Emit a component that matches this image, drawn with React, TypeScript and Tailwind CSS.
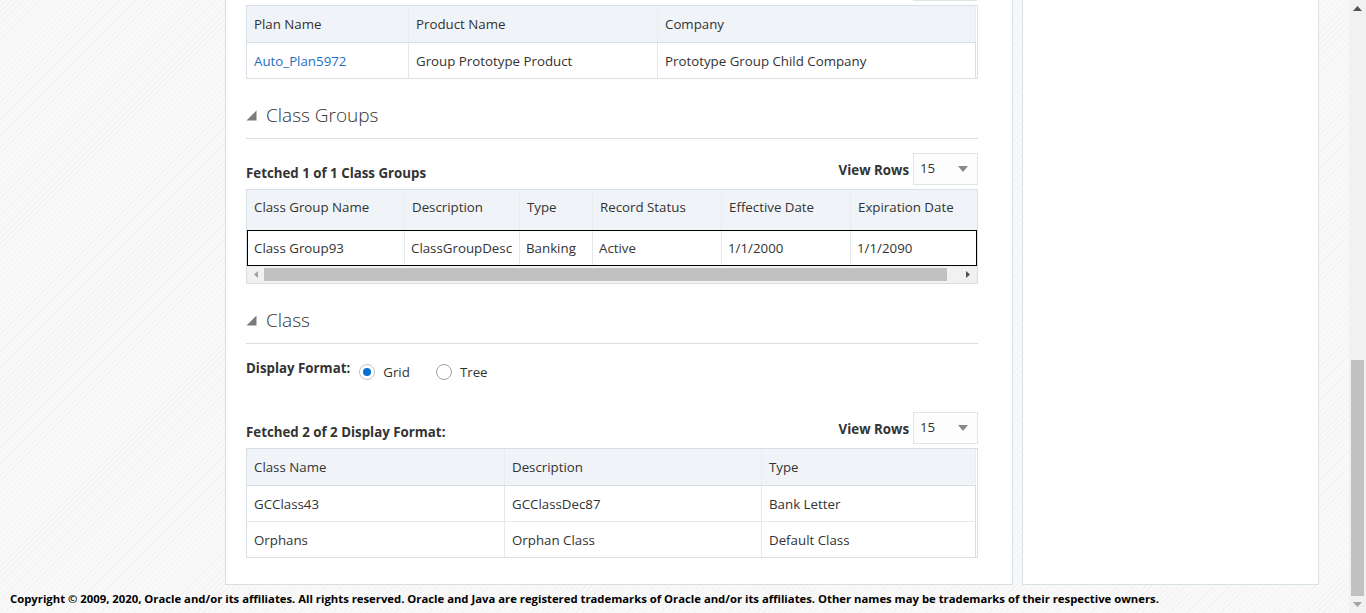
import React from "react";

const font = { fontFamily: '"Open Sans", "Noto Sans", Arial, sans-serif' };

function Triangle() {
  return (
    <svg width="11" height="11" viewBox="0 0 11 11" className="shrink-0">
      <polygon points="10.5,0.5 10.5,10.5 0.5,10.5" fill="#7a7a7a" />
    </svg>
  );
}

function SectionTitle({ title, className }: { title: string; className: string }) {
  return (
    <div className={`flex items-center gap-[9px] border-b border-[#d6dfe6] pb-[9px] ${className}`}>
      <Triangle />
      <span className="text-[19px] leading-[28px] font-light text-[#333]">{title}</span>
    </div>
  );
}

function Caret() {
  return (
    <svg width="10" height="6" viewBox="0 0 10 6">
      <polygon points="0,0 10,0 5,6" fill="#8a8a8a" />
    </svg>
  );
}

function ViewRows() {
  return (
    <div className="flex items-center gap-[4px]">
      <span className="text-[13.3px] font-bold text-[#333] leading-[18px] mt-[2px]">View Rows</span>
      <div className="flex items-center justify-between w-[65px] h-[32px] border border-[#dfe4e7] bg-[#fdfdfe] pl-[6px] pr-[9px]">
        <span className="text-[13.3px] text-[#333]">15</span>
        <Caret />
      </div>
    </div>
  );
}

function FetchRow({ label, className }: { label: string; className: string }) {
  return (
    <div className={`flex items-end justify-between ${className}`}>
      <span className="text-[13.3px] font-bold text-[#333] leading-[18px] pb-[3px]">{label}</span>
      <ViewRows />
    </div>
  );
}

type Col = { label: string; w: string };

function Cell({
  children,
  w,
  last,
  head,
  pad = "pt-[2px]",
}: {
  children: React.ReactNode;
  w: string;
  last?: boolean;
  head?: boolean;
  pad?: string;
}) {
  return (
    <div
      className={`${w} ${pad} shrink-0 flex items-center pl-[7px] overflow-hidden whitespace-nowrap ${
        last ? "" : head ? "border-r border-[#e8edf2]" : "border-r border-[#e6e9ec]"
      }`}
    >
      {children}
    </div>
  );
}

function Radio({ checked, label }: { checked: boolean; label: string }) {
  return (
    <div className="flex items-center gap-[8px]">
      <div
        className={`w-[16px] h-[16px] rounded-full border flex items-center justify-center bg-white ${
          checked ? "border-[#b8c4cf]" : "border-[#9aa4ad]"
        }`}
      >
        {checked && <div className="w-[8px] h-[8px] rounded-full bg-[#0572ce]" />}
      </div>
      <span className="text-[13.3px] text-[#333] leading-[18px]">{label}</span>
    </div>
  );
}

export default function App() {
  const planCols: Col[] = [
    { label: "Plan Name", w: "w-[162px]" },
    { label: "Product Name", w: "w-[249px]" },
    { label: "Company", w: "w-[318px]" },
  ];
  const cgCols: Col[] = [
    { label: "Class Group Name", w: "w-[158px]" },
    { label: "Description", w: "w-[115px]" },
    { label: "Type", w: "w-[73px]" },
    { label: "Record Status", w: "w-[129px]" },
    { label: "Effective Date", w: "w-[129px]" },
    { label: "Expiration Date", w: "w-[140px]" },
  ];
  const cgRow = ["Class Group93", "ClassGroupDesc", "Banking", "Active", "1/1/2000", "1/1/2090"];
  const clsCols: Col[] = [
    { label: "Class Name", w: "w-[258px]" },
    { label: "Description", w: "w-[257px]" },
    { label: "Type", w: "w-[214px]" },
  ];
  const clsRows = [
    ["GCClass43", "GCClassDec87", "Bank Letter"],
    ["Orphans", "Orphan Class", "Default Class"],
  ];

  return (
    <div
      style={font}
      className="flex h-[613px] w-full overflow-hidden bg-[repeating-linear-gradient(135deg,#f3f3f3_0px,#f3f3f3_1px,#f9f9f9_1px,#f9f9f9_4px)] text-[#333]"
    >
      <div className="flex-1 flex flex-col min-w-0">
        <div className="flex h-[585px] shrink-0">
          {/* Main panel */}
          <div className="ml-[225px] w-[788px] shrink-0 bg-white border-x border-b border-[#d6dfe6] pl-[20px] pr-[34px] flex flex-col">
            <div className="h-[5px] flex justify-end">
              <div className="w-[64px] h-[1px] bg-[#dfe4e7] mr-[1px]" />
            </div>

            {/* Plan table */}
            <div className="border border-[#d6dfe6] text-[13.3px]">
              <div className="flex h-[37px] bg-[#f0f3f7] border-b border-[#d6dfe6] text-[#333] mr-[1px]">
                {planCols.map((c) => (
                  <Cell key={c.label} w={c.w} head>
                    {c.label}
                  </Cell>
                ))}
              </div>
              <div className="flex h-[35px] mr-[1px]">
                <Cell w={planCols[0].w}>
                  <span className="text-[#1f6fbf]">Auto_Plan5972</span>
                </Cell>
                <Cell w={planCols[1].w}>Group Prototype Product</Cell>
                <div className={`${planCols[2].w} pt-[2px] shrink-0 flex items-center pl-[7px] border-r border-[#d6dfe6]`}>
                  Prototype Group Child Company
                </div>
              </div>
            </div>

            <SectionTitle title="Class Groups" className="mt-[22px]" />
            <FetchRow label="Fetched 1 of 1 Class Groups" className="mt-[14px]" />

            {/* Class group table */}
            <div className="mt-[4px] border border-[#d6dfe6] text-[13.3px] overflow-hidden">
              <div className="flex h-[40px] bg-[#f0f3f7]">
                {cgCols.map((c, i) => (
                  <Cell key={c.label} w={c.w} head last={i === cgCols.length - 1} pad="pb-[5px]">
                    {c.label}
                  </Cell>
                ))}
              </div>
              <div className="flex h-[36px] border border-black">
                {cgCols.map((c, i) => (
                  <div
                    key={c.label}
                    className={`${i === 0 ? "w-[157px]" : c.w} pt-[2px] shrink-0 flex items-center pl-[6px] whitespace-nowrap overflow-hidden ${
                      i === cgCols.length - 1 ? "" : "border-r border-[#e6e9ec]"
                    }`}
                  >
                    {cgRow[i]}
                  </div>
                ))}
              </div>
              {/* horizontal scrollbar */}
              <div className="flex items-center h-[17px] bg-[#f1f1f1]">
                <div className="w-[17px] flex items-center justify-center">
                  <svg width="4" height="7" viewBox="0 0 4 7">
                    <polygon points="4,0 4,7 0,3.5" fill="#a3a3a3" />
                  </svg>
                </div>
                <div className="h-[13px] w-[683px] bg-[#c1c1c1]" />
                <div className="flex-1 flex items-center justify-end pr-[7px]">
                  <svg width="4" height="7" viewBox="0 0 4 7">
                    <polygon points="0,0 0,7 4,3.5" fill="#505050" />
                  </svg>
                </div>
              </div>
            </div>

            <SectionTitle title="Class" className="mt-[22px]" />

            <div className="flex items-start mt-[15px]">
              <span className="text-[13.3px] font-bold leading-[18px]">Display Format:</span>
              <div className="flex items-center gap-[26px] ml-[9px] pt-[4px]">
                <Radio checked label="Grid" />
                <Radio checked={false} label="Tree" />
              </div>
            </div>

            <FetchRow label="Fetched 2 of 2 Display Format:" className="mt-[31px]" />

            {/* Class table */}
            <div className="mt-[4px] border border-[#d6dfe6] text-[13.3px]">
              <div className="flex h-[37px] bg-[#f0f3f7] border-b border-[#d6dfe6] mr-[1px]">
                {clsCols.map((c) => (
                  <Cell key={c.label} w={c.w} head>
                    {c.label}
                  </Cell>
                ))}
              </div>
              {clsRows.map((r, ri) => (
                <div
                  key={ri}
                  className={`flex mr-[1px] ${ri === 0 ? "h-[36px] border-b border-[#e6e9ec]" : "h-[35px]"}`}
                >
                  <Cell w={clsCols[0].w}>{r[0]}</Cell>
                  <Cell w={clsCols[1].w}>{r[1]}</Cell>
                  <div className={`${clsCols[2].w} pt-[2px] shrink-0 flex items-center pl-[7px] border-r border-[#d6dfe6]`}>{r[2]}</div>
                </div>
              ))}
            </div>
          </div>

          {/* Right panel */}
          <div className="ml-[9px] w-[297px] shrink-0 bg-white border-x border-b border-[#d6e1e8]" />
        </div>

        <div className="pl-[10px] pt-[6px] text-[11.3px] font-bold text-black whitespace-nowrap leading-[16px]">
          Copyright © 2009, 2020, Oracle and/or its affiliates. All rights reserved. Oracle and Java are registered trademarks of Oracle and/or its affiliates. Other names may be trademarks of their respective owners.
        </div>
      </div>

      {/* Vertical scrollbar */}
      <div className="w-[17px] shrink-0 bg-[#f1f1f1] flex flex-col items-center">
        <div className="h-[17px] flex items-center justify-center">
          <svg width="9" height="5" viewBox="0 0 9 5">
            <polygon points="0,5 9,5 4.5,0" fill="#505050" />
          </svg>
        </div>
        <div className="flex-1 w-full flex flex-col items-center">
          <div className="mt-[343px] w-[13px] h-[236px] bg-[#c1c1c1]" />
        </div>
        <div className="h-[17px] flex items-center justify-center">
          <svg width="9" height="5" viewBox="0 0 9 5">
            <polygon points="0,0 9,0 4.5,5" fill="#a3a3a3" />
          </svg>
        </div>
      </div>
    </div>
  );
}
